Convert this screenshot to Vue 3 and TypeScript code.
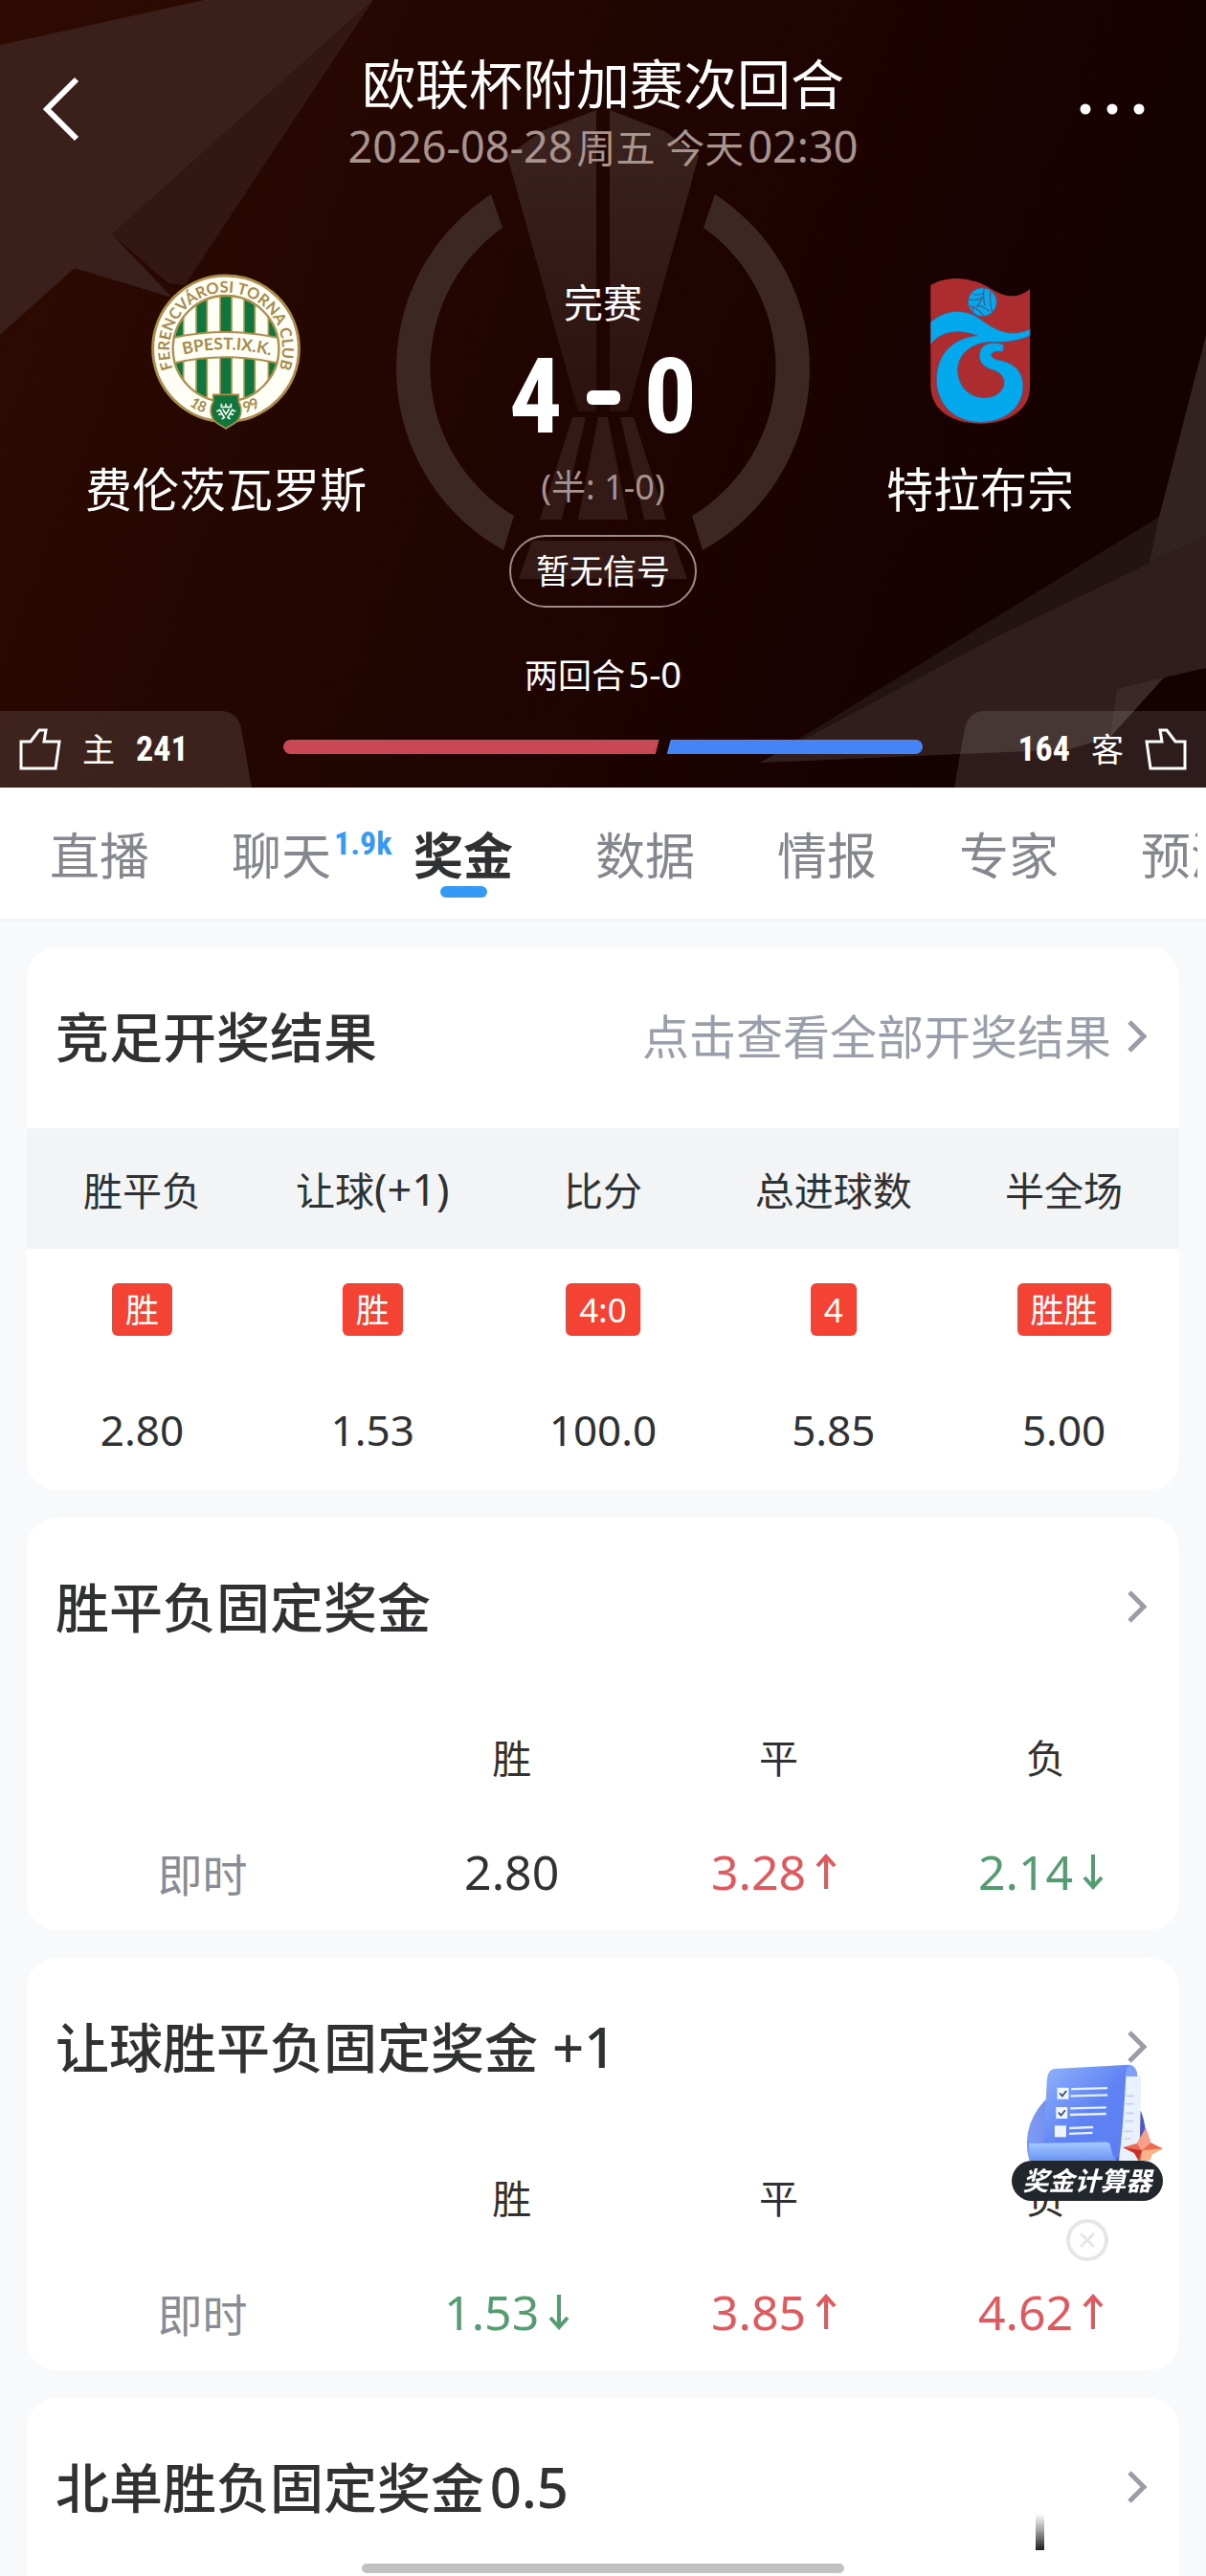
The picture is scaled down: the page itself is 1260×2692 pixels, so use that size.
<script setup lang="ts">
import { ref } from 'vue'

interface Tab {
  label: string
  badge?: string
}

interface Result {
  play: string
  extra?: string
  pick: string
  odds: string
}

type Trend = 'up' | 'down' | 'flat'

interface Odds {
  label: string
  value: string
  trend: Trend
}

interface OddsCard {
  title: string
  suffix?: string
  odds: Odds[]
}

const tabs: Tab[] = [
  { label: '直播' },
  { label: '聊天', badge: '1.9k' },
  { label: '奖金' },
  { label: '数据' },
  { label: '情报' },
  { label: '专家' },
  { label: '预测' },
]
const activeTab = ref('奖金')

const votes = ref({ home: 241, away: 164 })

const results: Result[] = [
  { play: '胜平负', pick: '胜', odds: '2.80' },
  { play: '让球', extra: '(+1)', pick: '胜', odds: '1.53' },
  { play: '比分', pick: '4:0', odds: '100.0' },
  { play: '总进球数', pick: '4', odds: '5.85' },
  { play: '半全场', pick: '胜胜', odds: '5.00' },
]

const oddsCards: OddsCard[] = [
  {
    title: '胜平负固定奖金',
    odds: [
      { label: '胜', value: '2.80', trend: 'flat' },
      { label: '平', value: '3.28', trend: 'up' },
      { label: '负', value: '2.14', trend: 'down' },
    ],
  },
  {
    title: '让球胜平负固定奖金',
    suffix: ' +1',
    odds: [
      { label: '胜', value: '1.53', trend: 'down' },
      { label: '平', value: '3.85', trend: 'up' },
      { label: '负', value: '4.62', trend: 'up' },
    ],
  },
]

const showCalculator = ref(true)
</script>

<template>
  <div class="page">
    <header class="hero">
      <svg class="hero-art" viewBox="0 0 1260 823" preserveAspectRatio="xMidYMid slice" aria-hidden="true">
        <defs>
          <linearGradient id="heroBg" x1="0" y1="0" x2="1" y2="0.25">
            <stop offset="0" stop-color="#2e0b02" />
            <stop offset="0.25" stop-color="#270801" />
            <stop offset="0.6" stop-color="#1f0402" />
            <stop offset="1" stop-color="#150101" />
          </linearGradient>
          <linearGradient id="trophy" x1="0" y1="0" x2="0" y2="1">
            <stop offset="0" stop-color="#3b231f" />
            <stop offset="1" stop-color="#2c120e" />
          </linearGradient>
        </defs>
        <rect width="1260" height="823" fill="url(#heroBg)" />
        <polygon points="0,47 213,0 390,0 117,245 0,350" fill="#3a1f1a" />
        <polygon points="390,0 193,298 176,296 117,245" fill="#331713" />
        <polygon points="77,280 117,245 180,311" fill="#3a201c" />
        <polygon points="794,797 1211,540 1260,528 1260,698 1216,708 1160,770 1117,783" fill="#231311" />
        <polygon points="794,797 1040,666 1260,560 1260,698 1216,708 1160,770 1117,783" fill="#301e1c" />
        <polygon points="1260,350 1211,540 1201,588 1260,560" fill="#322222" />
        <polygon points="1167,720 1216,708 1160,770" fill="#3a2928" />
        <g fill="#3d2724">
          <path d="M513 203A217 217 0 0 0 526 575L537 539A180 180 0 0 1 525 238Z" />
          <path d="M747 203A217 217 0 0 1 734 575L723 539A180 180 0 0 0 735 238Z" />
        </g>
        <g fill="url(#trophy)">
          <path d="M623 115L566 137L530 163L604 430H623Z" />
          <path d="M637 115L694 137L730 163L656 430H637Z" />
        </g>
        <g fill="#331a16">
          <path d="M625 436H635L656 543H604Z" />
          <path d="M598 436H612L587 543H564Z" />
          <path d="M662 436H648L673 543H696Z" />
          <path d="M556 565H704L718 605H542Z" />
        </g>
      </svg>

      <div class="topbar">
        <button class="icon-btn back" type="button" aria-label="返回">
          <svg width="38" height="68" viewBox="0 0 38 68"><path d="M35 3L4 34L35 65" fill="none" stroke="#fff" stroke-width="6" /></svg>
        </button>
        <div class="heading">
          <h1>欧联杯附加赛次回合</h1>
          <p><span class="date-num">2026-08-28</span>&#8202;周五 今天&#8202;<span class="date-num">02:30</span></p>
        </div>
        <button class="icon-btn more" type="button" aria-label="更多">
          <svg width="68" height="12" viewBox="0 0 68 12" fill="#fff"><circle cx="6" cy="6" r="5.5" /><circle cx="34" cy="6" r="5.5" /><circle cx="62" cy="6" r="5.5" /></svg>
        </button>
      </div>

      <section class="match">
        <div class="team">
          <svg width="158" height="165" viewBox="78 45 474 495" role="img" aria-label="费伦茨瓦罗斯">
            <defs>
              <clipPath id="ftcInner"><circle cx="315" cy="283" r="164" /></clipPath>
              <path id="ftcArc" d="M149.6 347A177 177 0 1 1 480.4 347" />
              <path id="ftcBand" d="M166 306Q315 264 472 309" />
              <path id="ftcYearL" d="M200 460Q225 480 256 486" />
              <path id="ftcYearR" d="M374 484Q404 478 436 454" />
            </defs>
            <circle cx="315" cy="283" r="229" fill="#fffef6" stroke="#ad8e4a" stroke-width="9" />
            <g clip-path="url(#ftcInner)">
              <rect x="145" y="110" width="340" height="340" fill="#fffef6" />
              <g fill="#12763c" stroke="#ad9a5c" stroke-width="5">
                <rect x="146" y="110" width="36" height="340" />
                <rect x="222" y="110" width="34" height="340" />
                <rect x="297" y="110" width="36" height="340" />
                <rect x="372" y="110" width="34" height="340" />
                <rect x="448" y="110" width="36" height="340" />
              </g>
              <path d="M145 250Q315 212 485 250V330Q315 290 145 330Z" fill="#fffef6" stroke="#ad8e4a" stroke-width="6" />
            </g>
            <circle cx="315" cy="283" r="166" fill="none" stroke="#ad8e4a" stroke-width="7" />
            <g class="crest-text">
              <text font-size="49"><textPath href="#ftcArc" startOffset="50%" text-anchor="middle">FERENCVÁROSI TORNA CLUB</textPath></text>
              <text font-size="52"><textPath href="#ftcBand" startOffset="50%" text-anchor="middle">BPEST.IX.K.</textPath></text>
              <text font-size="46"><textPath href="#ftcYearL">18</textPath></text>
              <text font-size="46"><textPath href="#ftcYearR">99</textPath></text>
            </g>
            <path d="M275 427H355V450Q366 468 361 490C354 518 328 522 315 534C302 522 276 518 269 490Q264 468 275 450Z" fill="#12763c" stroke="#ad8e4a" stroke-width="5" />
            <path d="M301 455V466H331V455M315 455V468M286 480L296 475L310 499L302 504M292 490L303 487M345 480L335 475L321 499L329 504M339 490L328 487M305 472L315 488L326 472" fill="none" stroke="#f3fbf4" stroke-width="5" />
          </svg>
          <h2>费伦茨瓦罗斯</h2>
        </div>

        <div class="score">
          <p class="status">完赛</p>
          <p class="goals"><span>4</span><i aria-label="-"></i><span>0</span></p>
          <p class="half">(半: 1-0)</p>
          <button class="signal" type="button">暂无信号</button>
          <p class="aggregate">两回合&#8202;<span class="aggregate-num">5-0</span></p>
        </div>

        <div class="team">
          <svg width="106" height="165" viewBox="96 45 318 495" role="img" aria-label="特拉布宗">
            <path d="M100 84C160 50 230 62 280 90C330 122 370 130 411 96V405C411 470 350 518 256 518C160 518 100 470 100 400Z" fill="#ad2c30" />
            <g fill="#04a8ec" stroke="#5c5576" stroke-width="3">
              <path d="M100 200C150 155 212 158 258 192C302 225 350 250 411 222V243C366 262 326 264 285 262C220 268 186 304 185 350C185 396 216 434 265 437C300 438 326 420 330 394C332 372 318 358 295 350C258 340 245 315 257 286C266 266 300 258 330 272L326 292H306C284 296 284 312 314 319C352 326 390 346 390 402C390 462 338 514 255 514C178 514 118 460 118 380C118 300 170 250 245 242C190 222 132 226 100 270Z" />
              <circle cx="262" cy="137" r="45" />
            </g>
            <path d="M232 112Q252 118 268 108M220 128Q240 136 264 122M268 94Q262 112 270 148M288 98Q284 130 292 168M262 122Q256 138 244 152M244 152Q254 142 284 166M222 152Q240 148 266 180M236 150Q226 166 238 174" fill="none" stroke="#4b5d86" stroke-width="4" />
          </svg>
          <h2>特拉布宗</h2>
        </div>
      </section>

      <div class="votes">
        <button class="vote" type="button" @click="votes.home++">
          <svg class="vote-bg" width="263" height="80" viewBox="0 0 263 80" aria-hidden="true"><path d="M0 0H230Q248 0 252 18L263 80H0Z" fill="#fff" fill-opacity="0.11" /></svg>
          <svg class="thumb" width="44" height="44" viewBox="0 0 44 44" aria-hidden="true"><path d="M2 14H12L21 2H28L26 14H42L38 42H2Z" fill="none" stroke="#fff" stroke-width="3" /></svg>
          <span class="side">主</span>
          <b>{{ votes.home }}</b>
        </button>
        <div class="vote-bar">
          <span class="home" :style="{ flexGrow: votes.home }"></span>
          <span class="away" :style="{ flexGrow: votes.away }"></span>
        </div>
        <button class="vote right" type="button" @click="votes.away++">
          <svg class="vote-bg" width="263" height="80" viewBox="0 0 263 80" aria-hidden="true"><path d="M263 0H33Q15 0 11 18L0 80H263Z" fill="#fff" fill-opacity="0.11" /></svg>
          <b>{{ votes.away }}</b>
          <span class="side">客</span>
          <svg class="thumb" width="44" height="44" viewBox="0 0 44 44" aria-hidden="true"><path d="M42 14H32L23 2H16L18 14H2L6 42H42Z" fill="none" stroke="#fff" stroke-width="3" /></svg>
        </button>
      </div>
    </header>

    <nav class="tabs">
      <div class="tabs-scroll">
        <button
          v-for="tab in tabs"
          :key="tab.label"
          type="button"
          class="tab"
          :class="{ active: tab.label === activeTab }"
          @click="activeTab = tab.label"
        >
          {{ tab.label }}<sup v-if="tab.badge">{{ tab.badge }}</sup>
        </button>
      </div>
    </nav>

    <main class="cards">
      <section class="card">
        <header class="card-head">
          <h3>竞足开奖结果</h3>
          <a class="all" href="#results">
            点击查看全部开奖结果
            <svg width="24" height="36" viewBox="0 0 24 36" aria-hidden="true"><path d="M4 3L19 18L4 33" /></svg>
          </a>
        </header>
        <table class="results">
          <thead>
            <tr>
              <th v-for="r in results" :key="r.play" scope="col">{{ r.play }}<span v-if="r.extra" class="extra">{{ r.extra }}</span></th>
            </tr>
          </thead>
          <tbody>
            <tr>
              <td v-for="r in results" :key="r.play"><span class="tag">{{ r.pick }}</span></td>
            </tr>
            <tr>
              <td v-for="r in results" :key="r.play" class="value">{{ r.odds }}</td>
            </tr>
          </tbody>
        </table>
      </section>

      <section v-for="card in oddsCards" :key="card.title" class="card">
        <header class="card-head">
          <h3>{{ card.title }}<span v-if="card.suffix">{{ card.suffix }}</span></h3>
          <a class="all" href="#odds" :aria-label="card.title">
            <svg width="24" height="36" viewBox="0 0 24 36" aria-hidden="true"><path d="M4 3L19 18L4 33" /></svg>
          </a>
        </header>
        <table class="odds">
          <thead>
            <tr>
              <td></td>
              <th v-for="o in card.odds" :key="o.label" scope="col">{{ o.label }}</th>
            </tr>
          </thead>
          <tbody>
            <tr>
              <th scope="row">即时</th>
              <td v-for="o in card.odds" :key="o.label" :class="o.trend">
                <span class="odd">
                  {{ o.value }}
                  <svg v-if="o.trend !== 'flat'" width="42" height="40" viewBox="0 0 42 40" aria-hidden="true">
                    <path v-if="o.trend === 'up'" d="M21 38V4M12 14L21 4L30 14" />
                    <path v-else d="M21 2V36M12 26L21 36L30 26" />
                  </svg>
                </span>
              </td>
            </tr>
          </tbody>
        </table>
      </section>

      <section class="card last">
        <header class="card-head">
          <h3>北单胜负固定奖金<span>&#8202;0.5</span></h3>
          <a class="all" href="#odds" aria-label="北单胜负固定奖金">
            <svg width="24" height="36" viewBox="0 0 24 36" aria-hidden="true"><path d="M4 3L19 18L4 33" /></svg>
          </a>
        </header>
        <span class="peek" aria-hidden="true"></span>
      </section>
    </main>

    <aside v-if="showCalculator" class="calc">
      <button class="calc-open" type="button">
        <svg width="158" height="102" viewBox="115 110 475 306" aria-hidden="true">
          <defs>
            <linearGradient id="sheet" x1="0" y1="0" x2="1" y2="1">
              <stop offset="0" stop-color="#8fb4fb" />
              <stop offset="0.5" stop-color="#5f82f4" />
              <stop offset="1" stop-color="#5b7df2" />
            </linearGradient>
            <linearGradient id="roll" x1="0" y1="0" x2="0" y2="1">
              <stop offset="0" stop-color="#a5cbff" />
              <stop offset="1" stop-color="#6a94f6" />
            </linearGradient>
            <linearGradient id="disc" x1="0" y1="0" x2="1" y2="0">
              <stop offset="0" stop-color="#7f9cf5" />
              <stop offset="1" stop-color="#4a55cf" />
            </linearGradient>
          </defs>
          <path d="M170 416A190 190 0 0 1 240 210L520 260Q540 300 540 416Z" fill="url(#disc)" />
          <path d="M470 150H522L516 416H452Z" fill="#e9f1fe" />
          <path d="M474 213H500M473 238H499M472 267H498M471 292H497M469 324H496M468 348H490" stroke="#c6d2ea" stroke-width="5" />
          <path d="M248 128L484 115Q508 118 510 152L474 150Q466 290 456 380Q452 416 420 416H214V372L226 160Q228 132 248 128Z" fill="url(#sheet)" />
          <path d="M484 115Q508 118 510 152L472 151Q474 120 484 115Z" fill="#7ea0f8" />
          <path d="M170 362L412 358Q424 358 426 374Q430 400 444 416H176Q168 392 170 362Z" fill="url(#roll)" />
          <g fill="#eef5ff">
            <rect x="258" y="187" width="36" height="36" />
            <rect x="254" y="248" width="36" height="36" />
            <rect x="250" y="306" width="36" height="36" />
          </g>
          <path d="M266 204L274 213L287 197M262 265L270 274L283 258" fill="none" stroke="#34486b" stroke-width="5" />
          <path d="M302 191L416 188M300 213L416 210M299 252L412 249M298 272L412 269M296 314L371 311M295 332L369 329" stroke="#e4efff" stroke-width="7" />
          <path d="M536 314L552 360L590 378L556 396L548 416H514L500 392L464 374L508 362Z" fill="#ee6a52" />
          <path d="M536 314L552 360L524 384L508 362Z" fill="#f7a08c" />
          <path d="M524 384L590 378L556 396L548 416H520Z" fill="#f9b48a" />
          <path d="M464 374L524 384L514 416L500 392Z" fill="#c92f2b" />
        </svg>
        <span>奖金计算器</span>
      </button>
      <button class="calc-close" type="button" aria-label="关闭" @click="showCalculator = false">
        <svg width="46" height="46" viewBox="0 0 46 46" aria-hidden="true" fill="none" stroke="#e6e6e6">
          <circle cx="23" cy="23" r="20" stroke-width="4" />
          <path d="M16 16L30 30M30 16L16 30" stroke-width="3" />
        </svg>
      </button>
    </aside>
    <div class="home-indicator" aria-hidden="true"></div>
  </div>
</template>

<style>
body {
  margin: 0;
  background: #f7f9fb;
}
</style>

<style scoped>
.page {
  position: relative;
  display: flex;
  flex-direction: column;
  min-height: 100vh;
  background: #f7f9fb;
  color: #303133;
  font-family: "Noto Sans", "Noto Sans CJK SC", sans-serif;
}
h1, h2, h3, p {
  margin: 0;
  font-weight: 400;
}
button {
  padding: 0;
  border: 0;
  background: none;
  color: inherit;
  font: inherit;
}

.hero {
  position: relative;
  overflow: hidden;
  padding-top: 53px;
  background: #1f0402;
  color: #fff;
}
.hero-art {
  position: absolute;
  inset: 0;
  width: 100%;
  height: 100%;
}
.topbar {
  position: relative;
  display: grid;
  grid-template-columns: 1fr auto 1fr;
  align-items: start;
}
.icon-btn {
  display: flex;
  align-items: center;
  height: 122px;
}
.back { padding-left: 45px; }
.more {
  justify-content: flex-end;
  padding-right: 64px;
}
.heading { text-align: center; }
.heading h1 {
  font-size: 56px;
  line-height: 68px;
}
.heading p {
  color: #a8948f;
  font-size: 41px;
  line-height: 64px;
}
.date-num { font-size: 45px; }

.match {
  position: relative;
  display: grid;
  grid-template-columns: 472px 1fr 472px;
  padding-top: 99px;
}
.team {
  display: flex;
  flex-direction: column;
  align-items: center;
}
.team h2 {
  margin-top: 29px;
  font-size: 49px;
  line-height: 64px;
}
.crest-text {
  fill: #a58a4c;
  font-family: Lato, sans-serif;
  font-weight: 700;
}
.score {
  display: flex;
  flex-direction: column;
  align-items: center;
}
.status {
  margin-top: 3px;
  font-size: 41px;
  line-height: 56px;
}
.goals {
  display: flex;
  align-items: center;
  gap: 25px;
  margin-top: 15px;
  font-family: "Roboto Condensed", Roboto, sans-serif;
  font-size: 110px;
  font-weight: 700;
  line-height: 112px;
}
.goals i {
  width: 35px;
  height: 15px;
  border-radius: 6px;
  background: #fff;
}
.half {
  margin-top: 14px;
  color: #a8948f;
  font-size: 36px;
  line-height: 48px;
}
.signal {
  margin-top: 26px;
  padding: 0 26px;
  border: 2px solid #9c8b88;
  border-radius: 38px;
  font-size: 35px;
  line-height: 72px;
}
.aggregate {
  margin-top: 45px;
  font-size: 35px;
  line-height: 48px;
}
.aggregate-num { font-size: 38px; }

.votes {
  position: relative;
  display: flex;
  margin-top: 13px;
}
.vote {
  position: relative;
  display: flex;
  align-items: center;
  gap: 22px;
  width: 263px;
  height: 80px;
  padding: 0 20px;
}
.vote.right { justify-content: flex-end; }
.vote-bg {
  position: absolute;
  inset: 0;
}
.thumb,
.side,
.vote b { position: relative; }
.side {
  font-size: 34px;
  line-height: 40px;
}
.vote b {
  font-family: "Roboto Condensed", Roboto, sans-serif;
  font-size: 36px;
  line-height: 40px;
}
.vote-bar {
  display: flex;
  flex: 1;
  gap: 8px;
  height: 15px;
  margin: 30px 33px 0;
}
.vote-bar span { flex-basis: 0; }
.vote-bar .home {
  border-radius: 8px 0 0 8px;
  background: #c94856;
  clip-path: polygon(0 0, 100% 0, calc(100% - 4px) 100%, 0 100%);
}
.vote-bar .away {
  border-radius: 0 8px 8px 0;
  background: #4584f7;
  clip-path: polygon(4px 0, 100% 0, 100% 100%, 0 100%);
}

.tabs {
  padding: 0 9px 0 52px;
  border-bottom: 3px solid #f1f3f6;
  background: #fff;
}
.tabs-scroll {
  display: flex;
  gap: 86px;
  overflow: hidden;
}
.tab {
  position: relative;
  flex: none;
  height: 137px;
  color: #84878d;
  font-size: 52px;
}
.tab.active {
  color: #303133;
  font-weight: 700;
}
.tab.active::after {
  position: absolute;
  bottom: 22px;
  left: 50%;
  width: 49px;
  height: 12px;
  margin-left: -24px;
  border-radius: 6px;
  background: #359af5;
  content: "";
}
.tab sup {
  position: absolute;
  top: 38px;
  left: 107px;
  color: #359af5;
  font-family: "Roboto Condensed", Roboto, sans-serif;
  font-size: 34px;
  font-weight: 700;
  line-height: 40px;
}

.cards {
  display: flex;
  flex: 1;
  flex-direction: column;
  gap: 29px;
  padding: 27px 28px 0;
}
.card {
  overflow: hidden;
  border-radius: 32px;
  background: #fff;
}
.card.last {
  position: relative;
  flex: 1 0 186px;
  border-radius: 32px 32px 0 0;
}
.card-head {
  display: flex;
  align-items: center;
  justify-content: space-between;
  height: 185px;
  padding: 0 32px 4px 30px;
}
.card-head h3 {
  font-size: 56px;
  font-weight: 500;
  line-height: 72px;
}
.card-head h3 span { font-size: 58px; }
.all {
  display: flex;
  align-items: center;
  gap: 15px;
  color: #9a9eaa;
  font-size: 49px;
  line-height: 72px;
  text-decoration: none;
}
.all path {
  fill: none;
  stroke: #9a9da6;
  stroke-width: 5;
}
table {
  width: 100%;
  table-layout: fixed;
  border-collapse: collapse;
}
th,
td {
  padding: 0;
  text-align: center;
  vertical-align: middle;
}
th {
  font-size: 41px;
  font-weight: 400;
}
.results th,
.results td { height: 126px; }
.results thead { background: #f2f4f6; }
.results .value { font-size: 44px; }
.extra { font-size: 45px; }
.tag {
  display: inline-block;
  padding: 0 14px;
  border-radius: 6px;
  background: #f44235;
  color: #fff;
  font-size: 35px;
  line-height: 55px;
  vertical-align: middle;
}
.odds thead td { width: 30.5%; }
.odds thead th { height: 120px; }
.odds tbody th,
.odds tbody td { height: 122px; }
.odds tbody th {
  color: #898c92;
  font-size: 47px;
}
.odds tbody td { font-size: 50px; }
.odd {
  display: inline-flex;
  align-items: center;
}
.odd path {
  fill: none;
  stroke: currentColor;
  stroke-width: 4;
}
.odds .up { color: #e0595e; }
.odds .down { color: #559c70; }
.peek {
  position: absolute;
  right: 141px;
  bottom: 27px;
  width: 9px;
  height: 38px;
  background: linear-gradient(#fff, #999 50%, #1c1c1c);
}

.calc {
  position: fixed;
  right: 45px;
  bottom: 328px;
  display: flex;
  flex-direction: column;
  align-items: center;
}
.calc-open {
  display: flex;
  flex-direction: column;
  align-items: center;
}
.calc-open span {
  width: 158px;
  border-radius: 21px;
  background: #22272e;
  color: #fff;
  font-size: 27px;
  font-style: italic;
  font-weight: 700;
  line-height: 42px;
}
.calc-close {
  display: flex;
  margin-top: 18px;
}
.home-indicator {
  position: fixed;
  bottom: 3px;
  left: 50%;
  width: 40%;
  height: 10px;
  border-radius: 5px;
  background: #c1c1c1;
  transform: translateX(-50%);
}
</style>
